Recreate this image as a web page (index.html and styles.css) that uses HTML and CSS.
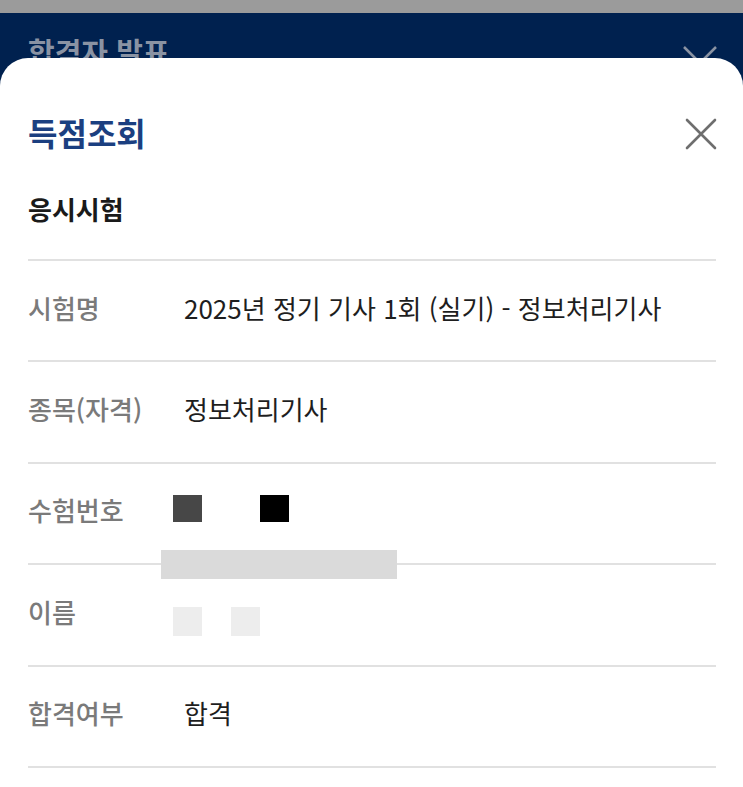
FILE: index.html
```html
<!DOCTYPE html>
<html lang="ko">
<head>
<meta charset="utf-8">
<link rel="stylesheet" href="styles.css">
</head>
<body>
<div class="status"></div>
<header class="topbar">
  <span class="topbar-title">합격자 발표</span>
  <svg class="topbar-close" width="36" height="36" viewBox="0 0 36 36"><path d="M2 2 L34 34 M34 2 L2 34" stroke="#8a93a3" stroke-width="2.5" fill="none"/></svg>
</header>
<section class="sheet">
  <div class="sheet-head">
    <h1 class="sheet-title">득점조회</h1>
    <svg class="close" width="32" height="32" viewBox="0 0 32 32"><path d="M2 2 L30 30 M30 2 L2 30" stroke="#6e6e6e" stroke-width="2.6" stroke-linecap="round" fill="none"/></svg>
  </div>
  <h2 class="section">응시시험</h2>
  <div class="table">
    <div class="row"><span class="label">시험명</span><span class="value">2025년 정기 기사 1회 (실기) - 정보처리기사</span></div>
    <div class="row"><span class="label">종목(자격)</span><span class="value">정보처리기사</span></div>
    <div class="row"><span class="label">수험번호</span><span class="value"><i class="blk dark1"></i><i class="blk dark2"></i></span><i class="bar"></i></div>
    <div class="row"><span class="label">이름</span><span class="value"><i class="blk light1"></i><i class="blk light2"></i></span></div>
    <div class="row"><span class="label">합격여부</span><span class="value">합격</span></div>
  </div>
</section>
</body>
</html>
```
FILE: styles.css
```css
* { box-sizing: border-box; }
html, body { margin: 0; padding: 0; }
body {
  width: 743px;
  height: 787px;
  overflow: hidden;
  position: relative;
  font-family: "Noto Sans CJK KR", "Noto Sans", sans-serif;
  background: #00214f;
}
.status { height: 13px; background: #9b9b9b; }
.topbar {
  height: 80px;
  background: #00214f;
  display: flex;
  justify-content: space-between;
  align-items: flex-start;
  padding: 18px 27px 0 28px;
}
.topbar-title {
  color: #8a93a3;
  font-size: 29px;
  font-weight: 700;
  line-height: 40px;
}
.topbar-close { margin-top: 14px; margin-right: -2px; }
.sheet {
  position: absolute;
  top: 58px;
  left: 0;
  right: 0;
  bottom: 0;
  background: #fff;
  border-radius: 28px 28px 0 0;
  padding: 52px 27px 0 28px;
}
.sheet-head {
  display: flex;
  justify-content: space-between;
  align-items: center;
  height: 44px;
}
.sheet-title {
  margin: 0;
  font-size: 32px;
  font-weight: 700;
  color: #1b3f80;
  line-height: 44px;
}
.close { margin-right: -1px; margin-top: 4px; }
.section {
  margin: 37px 0 0;
  font-size: 26px;
  font-weight: 700;
  color: #1a1a1a;
  line-height: 36px;
  padding-bottom: 32px;
  border-bottom: 2px solid #e1e1e1;
}
.row {
  position: relative;
  display: flex;
  align-items: center;
  height: 101.4px;
  padding-bottom: 6px;
  border-bottom: 2px solid #e1e1e1;
  font-size: 26px;
  line-height: 36px;
}
.label {
  width: 156px;
  flex: none;
  color: #7a7a7a;
  font-weight: 500;
}
.value {
  color: #1e1e1e;
  font-weight: 400;
  display: flex;
  align-items: center;
}
.blk { display: block; width: 29px; height: 27px; }
.dark1 { background: #474747; margin-left: -11px; margin-top: -4px; }
.dark2 { background: #000; margin-left: 58px; margin-top: -4px; }
.light1 { background: #ededed; margin-left: -11px; width: 29px; height: 29px; margin-top: 20px; }
.light2 { background: #ededed; margin-left: 29px; width: 29px; height: 29px; margin-top: 20px; }
.bar {
  position: absolute;
  left: 133px;
  top: 86px;
  width: 236px;
  height: 29px;
  background: #dadada;
  z-index: 1;
}
```
